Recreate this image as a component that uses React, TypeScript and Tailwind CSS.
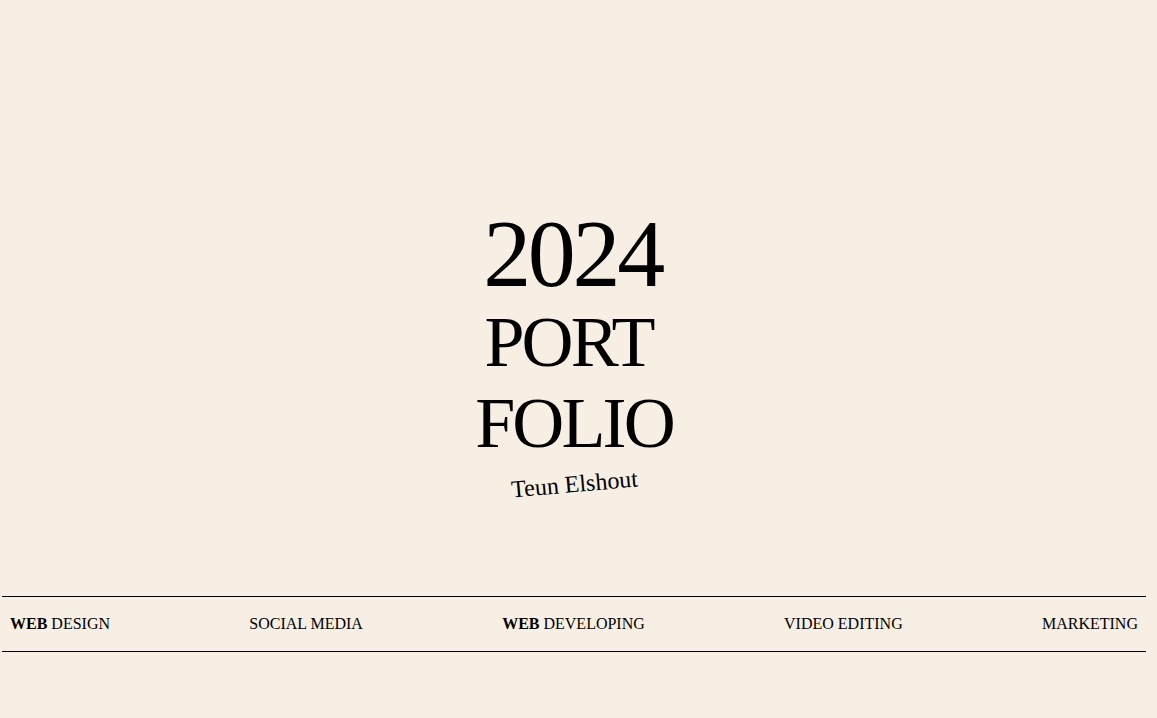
const services = [
  { bold: "WEB", rest: " DESIGN" },
  { bold: "", rest: "SOCIAL MEDIA" },
  { bold: "WEB", rest: " DEVELOPING" },
  { bold: "", rest: "VIDEO EDITING" },
  { bold: "", rest: "MARKETING" },
];

export default function App() {
  return (
    <div
      className="min-h-screen w-full bg-[#f7efe3] text-black"
      style={{ fontFamily: '"Liberation Serif", "Times New Roman", serif' }}
    >
      <div className="ml-[2px] w-[1144px]">
        {/* Hero */}
        <section className="h-[596px] pt-[206px] flex flex-col items-center">
          <h1 className="pr-[3px] text-[96px] leading-[96px] tracking-[-0.035em] font-normal">
            2024
          </h1>
          <h2 className="flex flex-col items-center text-[72px] leading-[81px] tracking-[-0.04em] font-normal">
            <span className="pr-[11px]">PORT</span>
            <span>FOLIO</span>
          </h2>
          <p className="mt-1 text-2xl -rotate-[5deg]">Teun Elshout</p>
        </section>

        {/* Services */}
        <nav className="border-y border-black px-2 py-[17px] flex justify-between text-base leading-[20px]">
          {services.map((s, i) => (
            <span key={i}>
              {s.bold && <b className="font-bold">{s.bold}</b>}
              {s.rest}
            </span>
          ))}
        </nav>
      </div>
    </div>
  );
}
